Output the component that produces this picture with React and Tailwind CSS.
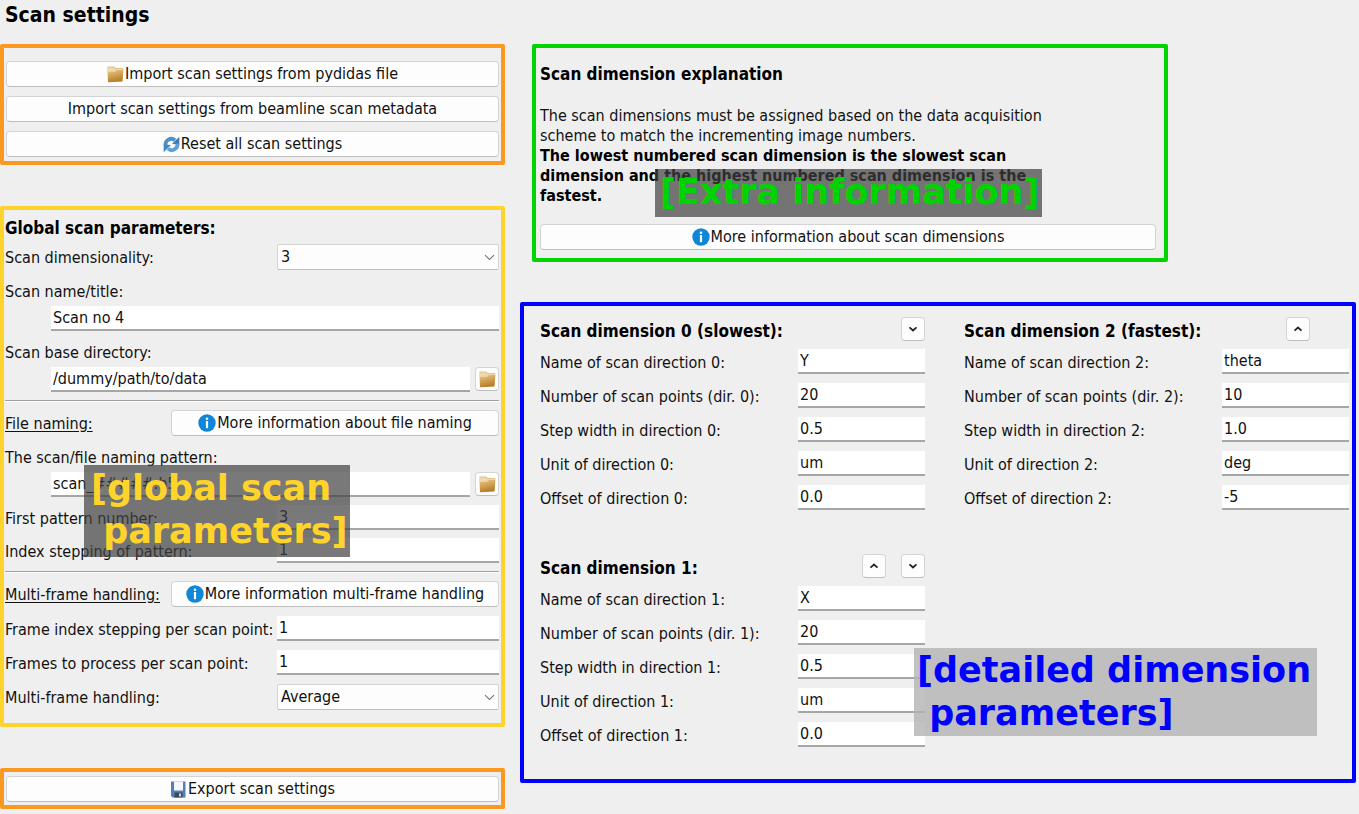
import React from "react";

const UI = "font-['DejaVu_Sans_Condensed','DejaVu_Sans',sans-serif] [font-stretch:condensed]";

function FolderIcon() {
  return (
    <svg width="17" height="17" viewBox="0 0 17 17" className="shrink-0" aria-hidden="true">
      <defs>
        <linearGradient id="folderFront" x1="0" y1="0" x2="0.3" y2="1">
          <stop offset="0" stopColor="#efcf92" />
          <stop offset="1" stopColor="#b87c24" />
        </linearGradient>
      </defs>
      <path d="M0.500 0.500h7l1 1.500h7.500v4H0.500z" fill="#dfc089" />
      <path d="M1 1.500h6l1 1.500h7v3H1z" fill="#ecd9b2" />
      <path d="M0.500 4.800h7.500l1.500-1.800h7l-1 12.500L1 16.300z" fill="url(#folderFront)" />
      <path d="M0.800 5.200h7.400l1.500-1.800h6.500" fill="none" stroke="#f8e6c2" strokeWidth="0.800" />
    </svg>
  );
}

function ReloadIcon() {
  return (
    <svg width="17" height="17" viewBox="0 0 17 17" className="shrink-0" aria-hidden="true">
      <path d="M2.600 9.500A5.700 5.700 0 0 1 12 4.300" fill="none" stroke="#4f8fc4" strokeWidth="3.800" />
      <path d="M16.300 0.800v7.700l-7.300-0.600z" fill="#3b7ab0" />
      <path d="M14.400 7.500A5.700 5.700 0 0 1 5 12.700" fill="none" stroke="#5ba3d6" strokeWidth="3.800" />
      <path d="M0.700 16.200V8.500l7.300 0.600z" fill="#4188c0" />
    </svg>
  );
}

function InfoIcon() {
  return (
    <svg width="18" height="18" viewBox="0 0 18 18" className="shrink-0" aria-hidden="true">
      <circle cx="9" cy="9" r="8.700" fill="#0f86d8" />
      <circle cx="9" cy="4.700" r="1.300" fill="#fff" />
      <rect x="7.900" y="7" width="2.200" height="7.200" fill="#fff" />
    </svg>
  );
}

function SaveIcon() {
  return (
    <svg width="17" height="17" viewBox="0 0 17 17" className="shrink-0" aria-hidden="true">
      <path d="M1 0.500h14.500v16H2.500L1 15z" fill="#5480b6" />
      <rect x="4" y="0.500" width="9" height="9" fill="#f4f8fc" />
      <rect x="4.500" y="11.500" width="8" height="5" fill="#3a4a5c" />
      <rect x="9" y="12.500" width="2" height="3" fill="#cdd6de" />
    </svg>
  );
}

function Chevron({ up }) {
  return (
    <svg width="10" height="6" viewBox="0 0 10 6" aria-hidden="true">
      <path d={up ? "M1.500 4.700L5 1.500l3.500 3.200" : "M1.500 1.300L5 4.500l3.500-3.200"} fill="none" stroke="#222" strokeWidth="1.700" />
    </svg>
  );
}

function PushButton({ icon, children }) {
  return (
    <button type="button" className="flex h-[26px] w-full items-center justify-center gap-px rounded border border-[#d4d4d4] border-b-[#bebebe] bg-[#fdfdfd] leading-5">
      {icon}
      <span>{children}</span>
    </button>
  );
}

function IconButton({ label, children }) {
  return (
    <button type="button" aria-label={label} className="flex h-6 w-6 shrink-0 items-center justify-center rounded border border-[#d4d4d4] border-b-[#bebebe] bg-[#fdfdfd]">
      {children}
    </button>
  );
}

function TextInput({ id, value }) {
  return (
    <input id={id} type="text" defaultValue={value} className="h-[25px] w-full min-w-0 border-b-2 border-[#a6a6a6] bg-white px-[2px] leading-5 outline-none" />
  );
}

function Select({ id, value, options }) {
  return (
    <div className="relative">
      <select id={id} defaultValue={value} className="block h-[26px] w-full appearance-none rounded-xs border border-[#d4d4d4] border-b-[#bebebe] bg-[#fdfdfd] px-[3px] leading-5 outline-none">
        {options.map((o) => <option key={o}>{o}</option>)}
      </select>
      <svg width="11" height="7" viewBox="0 0 11 7" className="pointer-events-none absolute right-1 top-[10px]" aria-hidden="true">
        <path d="M1 1.200l4.500 4.300L10 1.200" fill="none" stroke="#777" strokeWidth="1.100" />
      </svg>
    </div>
  );
}

function FormRow({ id, label, children }) {
  return (
    <div className="grid grid-cols-[272fr_222fr] items-center">
      <label htmlFor={id} className="whitespace-nowrap pt-[2px] leading-5">{label}</label>
      {children}
    </div>
  );
}

function StackedRow({ id, label, value, browse }) {
  return (
    <div>
      <label htmlFor={id} className="block leading-7">{label}</label>
      <div className="flex gap-[5px] pl-[46px]">
        <TextInput id={id} value={value} />
        {browse && <IconButton label={browse}><FolderIcon /></IconButton>}
      </div>
    </div>
  );
}

function InfoRow({ title, children }) {
  return (
    <div className="grid grid-cols-[166fr_328fr] items-center">
      <h3 className="whitespace-nowrap pt-[2px] leading-5 underline underline-offset-2">{title}</h3>
      <PushButton icon={<InfoIcon />}>{children}</PushButton>
    </div>
  );
}

function Divider() {
  return <hr className="h-[2px] border-t border-b border-t-[#a0a0a0] border-b-white" />;
}

function Dimension({ n, suffix = "", up, down, values }) {
  const labels = [
    `Name of scan direction ${n}:`,
    `Number of scan points (dir. ${n}):`,
    `Step width in direction ${n}:`,
    `Unit of direction ${n}:`,
    `Offset of direction ${n}:`,
  ];
  return (
    <section>
      <div className="flex h-6 items-start justify-between">
        <h2 className="text-[17px] font-bold leading-7 text-black">Scan dimension {n}{suffix}:</h2>
        <div className="flex gap-[15px]">
          {up && <IconButton label={`Move dimension ${n} up`}><Chevron up /></IconButton>}
          {down ? <IconButton label={`Move dimension ${n} down`}><Chevron /></IconButton> : <span className="w-6" />}
        </div>
      </div>
      <div className="mt-2 flex flex-col gap-[9px]">
        {labels.map((label, i) => (
          <div key={label} className="grid grid-cols-[258fr_127fr] items-center">
            <label htmlFor={`dim${n}-${i}`} className="pt-[2px] leading-5">{label}</label>
            <TextInput id={`dim${n}-${i}`} value={values[i]} />
          </div>
        ))}
      </div>
    </section>
  );
}

const NOTE = "pointer-events-none absolute whitespace-pre font-['DejaVu_Sans',sans-serif] text-[35px] font-bold [font-stretch:normal]";

export default function App() {
  return (
    <main className={`min-h-screen bg-[#efefef] pb-1 text-[16px] text-[#111] ${UI}`}>
      <h1 className="h-11 pl-[5px] text-[21px] font-bold leading-[30px] text-black">Scan settings</h1>
      <div className="grid grid-cols-[505fr_836fr] items-start gap-x-[15px] pr-[3px]">
        <div className="flex flex-col gap-[41px]">
          <section className="flex flex-col gap-[9px] rounded-xs border-4 border-[#fb9820] px-[2px] pt-[13px] pb-1">
            <PushButton icon={<FolderIcon />}>Import scan settings from pydidas file</PushButton>
            <PushButton>Import scan settings from beamline scan metadata</PushButton>
            <PushButton icon={<ReloadIcon />}>Reset all scan settings</PushButton>
          </section>

          <section className="relative rounded-xs border-4 border-[#ffd42a] pt-[6px] pr-[2px] pb-[13px] pl-px">
            <h2 className="text-[17px] font-bold leading-6 text-black">Global scan parameters:</h2>
            <div className="mt-1 flex flex-col gap-2">
              <FormRow id="ndim" label="Scan dimensionality:">
                <Select id="ndim" value="3" options={["1", "2", "3", "4"]} />
              </FormRow>
              <StackedRow id="title" label="Scan name/title:" value="Scan no 4" />
              <StackedRow id="base" label="Scan base directory:" value="/dummy/path/to/data" browse="Choose base directory" />
              <Divider />
              <InfoRow title="File naming:">More information about file naming</InfoRow>
              <StackedRow id="pattern" label="The scan/file naming pattern:" value="scan_#####.h5" browse="Choose naming pattern" />
              <FormRow id="first" label="First pattern number:"><TextInput id="first" value="3" /></FormRow>
              <FormRow id="step" label="Index stepping of pattern:"><TextInput id="step" value="1" /></FormRow>
              <Divider />
              <div className="flex flex-col gap-[9px]">
                <InfoRow title="Multi-frame handling:">More information multi-frame handling</InfoRow>
                <FormRow id="fstep" label="Frame index stepping per scan point:"><TextInput id="fstep" value="1" /></FormRow>
                <FormRow id="fproc" label="Frames to process per scan point:"><TextInput id="fproc" value="1" /></FormRow>
                <FormRow id="mode" label="Multi-frame handling:">
                  <Select id="mode" value="Average" options={["Average", "Sum", "Maximum", "Stack"]} />
                </FormRow>
              </div>
            </div>
            <p className={`${NOTE} left-[80px] top-[255px] h-[92px] w-[266px] bg-[#404040]/70 pt-[2px] pl-[7px] leading-[43px] text-[#ffd42a]`}>{"[global scan\n parameters]"}</p>
          </section>

          <section className="rounded-xs border-4 border-[#fb9820] px-[2px] pt-1 pb-[3px]">
            <PushButton icon={<SaveIcon />}>Export scan settings</PushButton>
          </section>
        </div>

        <div className="flex flex-col gap-10">
          <section className="relative ml-3 w-[636px] max-w-full rounded-xs border-4 border-[#00d400] px-1 pt-3 pb-2">
            <h2 className="text-[17px] font-bold leading-7 text-black">Scan dimension explanation</h2>
            <p className="mt-[18px] leading-5">
              The scan dimensions must be assigned based on the data acquisition<br />
              scheme to match the incrementing image numbers.<br />
              <strong className="text-black">
                The lowest numbered scan dimension is the slowest scan<br />
                dimension and the highest numbered scan dimension is the<br />
                fastest.
              </strong>
            </p>
            <div className="mt-[18px] pr-1">
              <PushButton icon={<InfoIcon />}>More information about scan dimensions</PushButton>
            </div>
            <p className={`${NOTE} left-[119px] top-[121px] h-12 w-[387px] bg-[#404040]/70 pl-[5px] leading-[46px] text-[#00d400]`}>[Extra information]</p>
          </section>

          <section className="relative rounded-xs border-4 border-[#0000ff] pt-[11px] pr-[3px] pb-8 pl-4">
            <div className="grid grid-flow-col grid-cols-2 grid-rows-2 gap-x-[39px] gap-y-11">
              <Dimension n={0} suffix=" (slowest)" down values={["Y", "20", "0.5", "um", "0.0"]} />
              <Dimension n={1} up down values={["X", "20", "0.5", "um", "0.0"]} />
              <Dimension n={2} suffix=" (fastest)" up values={["theta", "10", "1.0", "deg", "-5"]} />
            </div>
            <p className={`${NOTE} right-[35px] bottom-[43px] h-[88px] w-[403px] bg-[#b3b3b3]/80 pt-px pl-[3px] leading-[43px] text-[#0000ff]`}>{"[detailed dimension\n parameters]"}</p>
          </section>
        </div>
      </div>
    </main>
  );
}
